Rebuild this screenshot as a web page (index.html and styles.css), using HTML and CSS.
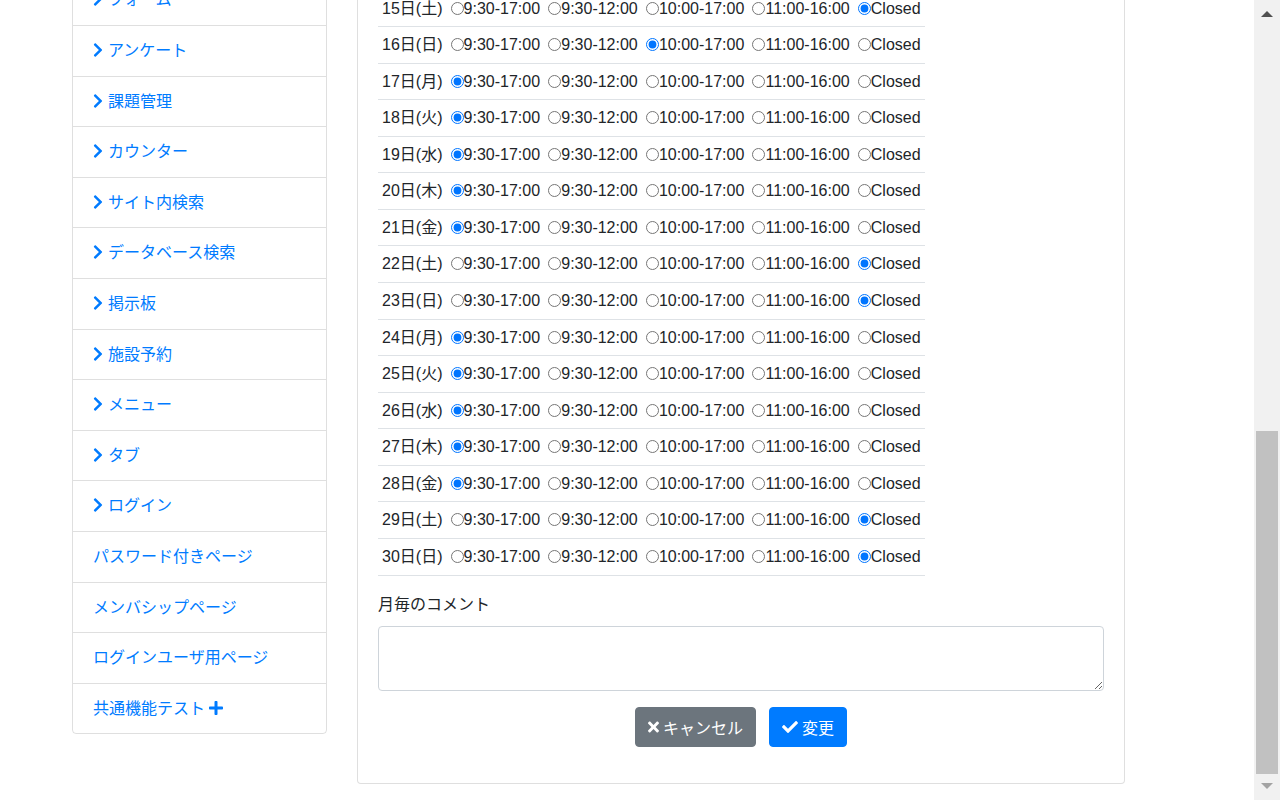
FILE: index.html
```html
<!DOCTYPE html>
<html lang="ja">
<head>
<meta charset="utf-8">
<title>施設予約</title>
<link rel="stylesheet" href="styles.css">
</head>
<body>
<div class="page">
  <aside class="sidebar">
    <ul class="menu">
      <li><a href="#"><svg class="chev" viewBox="0 0 320 512"><path d="M285.476 272.971L91.132 467.314c-9.373 9.373-24.569 9.373-33.941 0l-22.667-22.667c-9.357-9.357-9.375-24.522-.04-33.901L188.505 256 34.484 101.255c-9.335-9.379-9.317-24.544.04-33.901l22.667-22.667c9.373-9.373 24.569-9.373 33.941 0L285.475 239.03c9.373 9.372 9.373 24.568.001 33.941z"/></svg>フォーム</a></li>
      <li><a href="#"><svg class="chev" viewBox="0 0 320 512"><path d="M285.476 272.971L91.132 467.314c-9.373 9.373-24.569 9.373-33.941 0l-22.667-22.667c-9.357-9.357-9.375-24.522-.04-33.901L188.505 256 34.484 101.255c-9.335-9.379-9.317-24.544.04-33.901l22.667-22.667c9.373-9.373 24.569-9.373 33.941 0L285.475 239.03c9.373 9.372 9.373 24.568.001 33.941z"/></svg>アンケート</a></li>
      <li><a href="#"><svg class="chev" viewBox="0 0 320 512"><path d="M285.476 272.971L91.132 467.314c-9.373 9.373-24.569 9.373-33.941 0l-22.667-22.667c-9.357-9.357-9.375-24.522-.04-33.901L188.505 256 34.484 101.255c-9.335-9.379-9.317-24.544.04-33.901l22.667-22.667c9.373-9.373 24.569-9.373 33.941 0L285.475 239.03c9.373 9.372 9.373 24.568.001 33.941z"/></svg>課題管理</a></li>
      <li><a href="#"><svg class="chev" viewBox="0 0 320 512"><path d="M285.476 272.971L91.132 467.314c-9.373 9.373-24.569 9.373-33.941 0l-22.667-22.667c-9.357-9.357-9.375-24.522-.04-33.901L188.505 256 34.484 101.255c-9.335-9.379-9.317-24.544.04-33.901l22.667-22.667c9.373-9.373 24.569-9.373 33.941 0L285.475 239.03c9.373 9.372 9.373 24.568.001 33.941z"/></svg>カウンター</a></li>
      <li><a href="#"><svg class="chev" viewBox="0 0 320 512"><path d="M285.476 272.971L91.132 467.314c-9.373 9.373-24.569 9.373-33.941 0l-22.667-22.667c-9.357-9.357-9.375-24.522-.04-33.901L188.505 256 34.484 101.255c-9.335-9.379-9.317-24.544.04-33.901l22.667-22.667c9.373-9.373 24.569-9.373 33.941 0L285.475 239.03c9.373 9.372 9.373 24.568.001 33.941z"/></svg>サイト内検索</a></li>
      <li><a href="#"><svg class="chev" viewBox="0 0 320 512"><path d="M285.476 272.971L91.132 467.314c-9.373 9.373-24.569 9.373-33.941 0l-22.667-22.667c-9.357-9.357-9.375-24.522-.04-33.901L188.505 256 34.484 101.255c-9.335-9.379-9.317-24.544.04-33.901l22.667-22.667c9.373-9.373 24.569-9.373 33.941 0L285.475 239.03c9.373 9.372 9.373 24.568.001 33.941z"/></svg>データベース検索</a></li>
      <li><a href="#"><svg class="chev" viewBox="0 0 320 512"><path d="M285.476 272.971L91.132 467.314c-9.373 9.373-24.569 9.373-33.941 0l-22.667-22.667c-9.357-9.357-9.375-24.522-.04-33.901L188.505 256 34.484 101.255c-9.335-9.379-9.317-24.544.04-33.901l22.667-22.667c9.373-9.373 24.569-9.373 33.941 0L285.475 239.03c9.373 9.372 9.373 24.568.001 33.941z"/></svg>掲示板</a></li>
      <li><a href="#"><svg class="chev" viewBox="0 0 320 512"><path d="M285.476 272.971L91.132 467.314c-9.373 9.373-24.569 9.373-33.941 0l-22.667-22.667c-9.357-9.357-9.375-24.522-.04-33.901L188.505 256 34.484 101.255c-9.335-9.379-9.317-24.544.04-33.901l22.667-22.667c9.373-9.373 24.569-9.373 33.941 0L285.475 239.03c9.373 9.372 9.373 24.568.001 33.941z"/></svg>施設予約</a></li>
      <li><a href="#"><svg class="chev" viewBox="0 0 320 512"><path d="M285.476 272.971L91.132 467.314c-9.373 9.373-24.569 9.373-33.941 0l-22.667-22.667c-9.357-9.357-9.375-24.522-.04-33.901L188.505 256 34.484 101.255c-9.335-9.379-9.317-24.544.04-33.901l22.667-22.667c9.373-9.373 24.569-9.373 33.941 0L285.475 239.03c9.373 9.372 9.373 24.568.001 33.941z"/></svg>メニュー</a></li>
      <li><a href="#"><svg class="chev" viewBox="0 0 320 512"><path d="M285.476 272.971L91.132 467.314c-9.373 9.373-24.569 9.373-33.941 0l-22.667-22.667c-9.357-9.357-9.375-24.522-.04-33.901L188.505 256 34.484 101.255c-9.335-9.379-9.317-24.544.04-33.901l22.667-22.667c9.373-9.373 24.569-9.373 33.941 0L285.475 239.03c9.373 9.372 9.373 24.568.001 33.941z"/></svg>タブ</a></li>
      <li><a href="#"><svg class="chev" viewBox="0 0 320 512"><path d="M285.476 272.971L91.132 467.314c-9.373 9.373-24.569 9.373-33.941 0l-22.667-22.667c-9.357-9.357-9.375-24.522-.04-33.901L188.505 256 34.484 101.255c-9.335-9.379-9.317-24.544.04-33.901l22.667-22.667c9.373-9.373 24.569-9.373 33.941 0L285.475 239.03c9.373 9.372 9.373 24.568.001 33.941z"/></svg>ログイン</a></li>
      <li><a href="#">パスワード付きページ</a></li>
      <li><a href="#">メンバシップページ</a></li>
      <li><a href="#">ログインユーザ用ページ</a></li>
      <li><a href="#">共通機能テスト <svg class="plus" viewBox="0 0 448 512"><path d="M416 208H272V64c0-17.67-14.330-32-32-32h-32c-17.67 0-32 14.33-32 32v144H32c-17.67 0-32 14.33-32 32v32c0 17.67 14.33 32 32 32h144v144c0 17.67 14.33 32 32 32h32c17.67 0 32-14.33 32-32V304h144c17.67 0 32-14.33 32-32v-32c0-17.67-14.33-32-32-32z"/></svg></a></li>
    </ul>
  </aside>

  <main class="card">
    <form class="card-body">
      <table class="days">
        <tbody>
          <tr><td>15日(土) <label><input type="radio" name="d15">9:30-17:00</label> <label><input type="radio" name="d15">9:30-12:00</label> <label><input type="radio" name="d15">10:00-17:00</label> <label><input type="radio" name="d15">11:00-16:00</label> <label><input type="radio" name="d15" checked>Closed</label></td></tr>
          <tr><td>16日(日) <label><input type="radio" name="d16">9:30-17:00</label> <label><input type="radio" name="d16">9:30-12:00</label> <label><input type="radio" name="d16" checked>10:00-17:00</label> <label><input type="radio" name="d16">11:00-16:00</label> <label><input type="radio" name="d16">Closed</label></td></tr>
          <tr><td>17日(月) <label><input type="radio" name="d17" checked>9:30-17:00</label> <label><input type="radio" name="d17">9:30-12:00</label> <label><input type="radio" name="d17">10:00-17:00</label> <label><input type="radio" name="d17">11:00-16:00</label> <label><input type="radio" name="d17">Closed</label></td></tr>
          <tr><td>18日(火) <label><input type="radio" name="d18" checked>9:30-17:00</label> <label><input type="radio" name="d18">9:30-12:00</label> <label><input type="radio" name="d18">10:00-17:00</label> <label><input type="radio" name="d18">11:00-16:00</label> <label><input type="radio" name="d18">Closed</label></td></tr>
          <tr><td>19日(水) <label><input type="radio" name="d19" checked>9:30-17:00</label> <label><input type="radio" name="d19">9:30-12:00</label> <label><input type="radio" name="d19">10:00-17:00</label> <label><input type="radio" name="d19">11:00-16:00</label> <label><input type="radio" name="d19">Closed</label></td></tr>
          <tr><td>20日(木) <label><input type="radio" name="d20" checked>9:30-17:00</label> <label><input type="radio" name="d20">9:30-12:00</label> <label><input type="radio" name="d20">10:00-17:00</label> <label><input type="radio" name="d20">11:00-16:00</label> <label><input type="radio" name="d20">Closed</label></td></tr>
          <tr><td>21日(金) <label><input type="radio" name="d21" checked>9:30-17:00</label> <label><input type="radio" name="d21">9:30-12:00</label> <label><input type="radio" name="d21">10:00-17:00</label> <label><input type="radio" name="d21">11:00-16:00</label> <label><input type="radio" name="d21">Closed</label></td></tr>
          <tr><td>22日(土) <label><input type="radio" name="d22">9:30-17:00</label> <label><input type="radio" name="d22">9:30-12:00</label> <label><input type="radio" name="d22">10:00-17:00</label> <label><input type="radio" name="d22">11:00-16:00</label> <label><input type="radio" name="d22" checked>Closed</label></td></tr>
          <tr><td>23日(日) <label><input type="radio" name="d23">9:30-17:00</label> <label><input type="radio" name="d23">9:30-12:00</label> <label><input type="radio" name="d23">10:00-17:00</label> <label><input type="radio" name="d23">11:00-16:00</label> <label><input type="radio" name="d23" checked>Closed</label></td></tr>
          <tr><td>24日(月) <label><input type="radio" name="d24" checked>9:30-17:00</label> <label><input type="radio" name="d24">9:30-12:00</label> <label><input type="radio" name="d24">10:00-17:00</label> <label><input type="radio" name="d24">11:00-16:00</label> <label><input type="radio" name="d24">Closed</label></td></tr>
          <tr><td>25日(火) <label><input type="radio" name="d25" checked>9:30-17:00</label> <label><input type="radio" name="d25">9:30-12:00</label> <label><input type="radio" name="d25">10:00-17:00</label> <label><input type="radio" name="d25">11:00-16:00</label> <label><input type="radio" name="d25">Closed</label></td></tr>
          <tr><td>26日(水) <label><input type="radio" name="d26" checked>9:30-17:00</label> <label><input type="radio" name="d26">9:30-12:00</label> <label><input type="radio" name="d26">10:00-17:00</label> <label><input type="radio" name="d26">11:00-16:00</label> <label><input type="radio" name="d26">Closed</label></td></tr>
          <tr><td>27日(木) <label><input type="radio" name="d27" checked>9:30-17:00</label> <label><input type="radio" name="d27">9:30-12:00</label> <label><input type="radio" name="d27">10:00-17:00</label> <label><input type="radio" name="d27">11:00-16:00</label> <label><input type="radio" name="d27">Closed</label></td></tr>
          <tr><td>28日(金) <label><input type="radio" name="d28" checked>9:30-17:00</label> <label><input type="radio" name="d28">9:30-12:00</label> <label><input type="radio" name="d28">10:00-17:00</label> <label><input type="radio" name="d28">11:00-16:00</label> <label><input type="radio" name="d28">Closed</label></td></tr>
          <tr><td>29日(土) <label><input type="radio" name="d29">9:30-17:00</label> <label><input type="radio" name="d29">9:30-12:00</label> <label><input type="radio" name="d29">10:00-17:00</label> <label><input type="radio" name="d29">11:00-16:00</label> <label><input type="radio" name="d29" checked>Closed</label></td></tr>
          <tr><td>30日(日) <label><input type="radio" name="d30">9:30-17:00</label> <label><input type="radio" name="d30">9:30-12:00</label> <label><input type="radio" name="d30">10:00-17:00</label> <label><input type="radio" name="d30">11:00-16:00</label> <label><input type="radio" name="d30" checked>Closed</label></td></tr>
        </tbody>
      </table>

      <div class="form-group">
        <label class="field-label" for="comment">月毎のコメント</label>
        <textarea id="comment" class="comment"></textarea>
      </div>

      <div class="actions">
        <button type="button" class="btn btn-cancel"><svg class="ico-x" viewBox="0 0 352 512"><path d="M242.72 256l100.07-100.07c12.28-12.28 12.28-32.19 0-44.48l-22.24-22.24c-12.28-12.28-32.19-12.28-44.480 0L176 189.28 75.93 89.21c-12.28-12.28-32.19-12.28-44.48 0L9.21 111.45c-12.28 12.28-12.28 32.19 0 44.48L109.28 256 9.21 356.07c-12.28 12.28-12.28 32.19 0 44.48l22.24 22.24c12.28 12.28 32.2 12.28 44.48 0L176 322.72l100.07 100.07c12.28 12.28 32.2 12.28 44.48 0l22.240-22.24c12.28-12.28 12.28-32.19 0-44.48L242.72 256z"/></svg>キャンセル</button>
        <button type="submit" class="btn btn-primary"><svg class="ico-check" viewBox="0 0 512 512"><path d="M173.898 439.404l-166.4-166.4c-9.997-9.997-9.997-26.206 0-36.204l36.203-36.204c9.997-9.998 26.207-9.998 36.204 0L192 312.69 432.095 72.596c9.997-9.997 26.207-9.997 36.204 0l36.203 36.204c9.997 9.997 9.997 26.206 0 36.204l-294.4 294.401c-9.998 9.997-26.207 9.997-36.204-.001z"/></svg>変更</button>
      </div>
    </form>
  </main>
</div>

<div class="scrollbar">
  <div class="sb-up"></div>
  <div class="sb-thumb"></div>
  <div class="sb-down"></div>
</div>
</body>
</html>
```

FILE: styles.css
```css
* { box-sizing: border-box; }

html, body {
  margin: 0;
  padding: 0;
  overflow: hidden;
  background: #fff;
}

body {
  font-family: "Liberation Sans", "Noto Sans CJK JP", sans-serif;
  font-size: 16px;
  color: #212529;
}

.page {
  display: flex;
  align-items: flex-start;
  gap: 30px;
  padding-left: 72px;
  margin-top: -30.5px;
}

/* Sidebar */
.sidebar {
  width: 255px;
  flex: none;
  margin-top: 4.9px;
}

.menu {
  list-style: none;
  margin: 0;
  padding: 0;
  border: 1px solid rgba(0,0,0,.125);
  border-radius: 4px;
}

.menu li + li {
  border-top: 1px solid rgba(0,0,0,.125);
}

.menu a {
  display: block;
  padding: 12px 20px;
  line-height: 25.6px;
  color: #007bff;
  text-decoration: none;
}

.chev {
  width: 10px;
  height: 16px;
  fill: #007bff;
  vertical-align: -2px;
  margin-right: 5px;
}

.plus {
  width: 14px;
  height: 16px;
  fill: #007bff;
  vertical-align: -2px;
}

/* Card */
.card {
  width: 768px;
  flex: none;
  border: 1px solid rgba(0,0,0,.125);
  border-radius: 4px;
  background: #fff;
}

.card-body {
  padding: 20px;
  margin: 0;
}

.days {
  border-collapse: collapse;
  margin-bottom: 17px;
}

.days td {
  padding: 6px 4px;
  line-height: 23.56px;
  border-bottom: 1px solid #dee2e6;
  white-space: nowrap;
}

.days label {
  cursor: pointer;
}

.days input[type="radio"] {
  width: 13px;
  height: 13px;
  margin: 0 0 0 3.7px;
  vertical-align: -1px;
}

.field-label {
  display: block;
  line-height: 24px;
  margin-bottom: 9px;
}

.comment {
  display: block;
  width: 100%;
  height: 65px;
  padding: 6px 12px;
  border: 1px solid #ced4da;
  border-radius: 4px;
  font: inherit;
  color: #495057;
  resize: vertical;
}

.form-group {
  margin-bottom: 16px;
}

.actions {
  display: flex;
  justify-content: center;
  gap: 13px;
  margin-bottom: 16px;
}

.btn {
  display: inline-flex;
  align-items: center;
  height: 40px;
  padding: 0 12px;
  border: 1px solid transparent;
  border-radius: 4px;
  font: inherit;
  font-size: 16px;
  color: #fff;
  cursor: pointer;
}

.btn-cancel {
  background: #6c757d;
  border-color: #6c757d;
}

.btn-primary {
  background: #007bff;
  border-color: #007bff;
}

.ico-x {
  width: 11px;
  height: 16px;
  fill: #fff;
  margin-right: 4px;
}

.ico-check {
  width: 16px;
  height: 16px;
  fill: #fff;
  margin-right: 4px;
}

/* Fake scrollbar (page is shown scrolled to the bottom) */
.scrollbar {
  position: fixed;
  top: 0;
  right: 0;
  bottom: 0;
  width: 26px;
  background: #f1f1f1;
}

.sb-up {
  position: absolute;
  top: 11px;
  left: 7px;
  width: 0;
  height: 0;
  border-left: 6px solid transparent;
  border-right: 6px solid transparent;
  border-bottom: 6px solid #505050;
}

.sb-thumb {
  position: absolute;
  top: 431px;
  left: 2px;
  right: 2px;
  height: 343px;
  background: #c1c1c1;
}

.sb-down {
  position: absolute;
  top: 783px;
  left: 7px;
  width: 0;
  height: 0;
  border-left: 6px solid transparent;
  border-right: 6px solid transparent;
  border-top: 6px solid #a3a3a3;
}
```
